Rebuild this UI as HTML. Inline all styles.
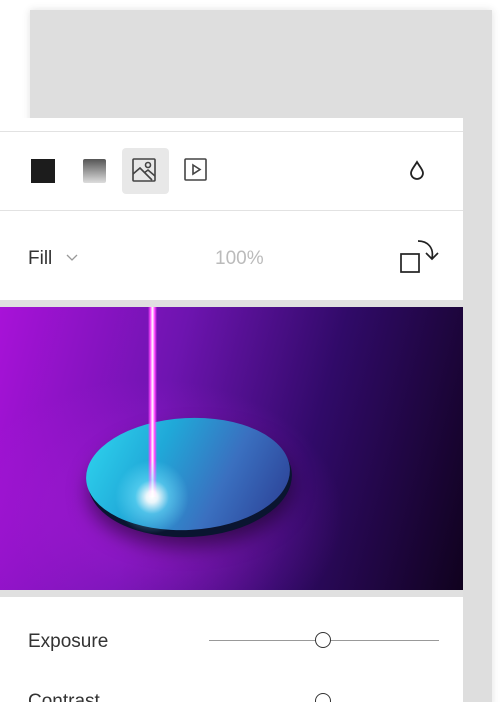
<!DOCTYPE html>
<html><head><style>
html,body{margin:0;width:500px;height:702px;overflow:hidden;background:#fff;font-family:"Liberation Sans",sans-serif;position:relative}
.back{position:absolute;left:30px;top:10px;width:462px;height:700px;background:#dedede;box-shadow:0 0 8px rgba(0,0,0,.12)}
.panel{position:absolute;left:0;top:118px;width:463px;height:584px;background:#fff;overflow:hidden}
.line{position:absolute;left:0;width:463px;height:1px;background:#e2e2e2}
.t{position:absolute;color:#333;font-size:19px}
</style></head><body>
<div class="back"></div>
<div class="panel">
 <div class="line" style="top:13px"></div>
 <div style="position:absolute;left:31px;top:41px;width:24px;height:24px;background:#1c1c1c"></div>
 <div style="position:absolute;left:83px;top:41px;width:23px;height:24px;background:linear-gradient(#555,#ddd);border-radius:2px"></div>
 <div style="position:absolute;left:122px;top:30px;width:47px;height:46px;background:#e8e8e8;border-radius:4px"></div>
 <svg style="position:absolute;left:132px;top:40px" width="26" height="26" viewBox="0 0 26 26" fill="none" stroke="#444" stroke-width="1.6"><rect x="1" y="1" width="22" height="22" rx="1"/><circle cx="16" cy="7" r="2.5"/><path d="M1 16 L8 10 L20 22 M12 15 L16 12 L23 18"/></svg>
 <svg style="position:absolute;left:184px;top:40px" width="24" height="24" viewBox="0 0 24 24" fill="none" stroke="#444" stroke-width="1.6"><rect x="1" y="1" width="21" height="21" rx="1"/><path d="M9 7 L16 11.5 L9 16Z"/></svg>
 <svg style="position:absolute;left:408px;top:42px" width="18" height="20" viewBox="0 0 18 20" fill="none" stroke="#222" stroke-width="1.8"><path d="M9 2 C6 7 3 10 3 13 A6 6 0 0 0 15 13 C15 10 12 7 9 2Z"/></svg>
 <div class="line" style="top:92px"></div>
 <div class="t" style="left:28px;top:130px">Fill</div>
 <svg style="position:absolute;left:66px;top:136px" width="12" height="8" viewBox="0 0 12 8" fill="none" stroke="#999" stroke-width="1.3"><path d="M1 1 L6 6 L11 1"/></svg>
 <div class="t" style="left:215px;top:130px;color:#bbb">100%</div>
 <svg style="position:absolute;left:398px;top:120px" width="44" height="36" viewBox="0 0 44 36" fill="none" stroke="#222" stroke-width="1.7"><rect x="3" y="16" width="18" height="18"/><path d="M20 3 C30 3 36 10 34 20 M28 15 L34 21 L40 15"/></svg>
 <div style="position:absolute;left:0;top:182px;width:463px;height:7px;background:#e0e0e0"></div>
 <div style="position:absolute;left:0;top:189px;width:463px;height:283px;overflow:hidden;background:linear-gradient(105deg,#a812d8 0%,#6e14b0 35%,#300a68 65%,#10021e 100%)">
  <div style="position:absolute;left:-60px;top:60px;width:420px;height:300px;background:radial-gradient(ellipse at center,rgba(190,30,230,.5),transparent 65%)"></div>
  <div style="position:absolute;left:88px;top:114px;width:204px;height:116px;border-radius:50%;background:#0a1530;transform:rotate(-3deg);box-shadow:0 10px 20px rgba(0,0,0,.5)"></div>
  <div style="position:absolute;left:86px;top:111px;width:204px;height:112px;border-radius:50%;background:linear-gradient(120deg,#30d8f0 0%,#20a8d8 35%,#3a70c0 65%,#2a3a90 100%);transform:rotate(-3deg)"></div>
  <div style="position:absolute;left:148px;top:0;width:9px;height:190px;background:linear-gradient(90deg,transparent,#ff40ff,#fff,#ff40ff,transparent)"></div>
  <div style="position:absolute;left:112px;top:150px;width:80px;height:80px;border-radius:50%;background:radial-gradient(circle,#fff 0%,rgba(255,255,255,.9) 10%,rgba(120,230,255,.5) 30%,transparent 65%)"></div>
 </div>
 <div style="position:absolute;left:0;top:472px;width:463px;height:7px;background:#e0e0e0"></div>
 <div class="t" style="left:28px;top:513px">Exposure</div>
 <div style="position:absolute;left:209px;top:522px;width:230px;height:1px;background:#999"></div>
 <div style="position:absolute;left:315px;top:514px;width:14px;height:14px;border:1.5px solid #333;border-radius:50%;background:#fff"></div>
 <div class="t" style="left:28px;top:573px">Contrast</div>
 <div style="position:absolute;left:315px;top:575px;width:14px;height:14px;border:1.5px solid #333;border-radius:50%;background:#fff"></div>
</div>
</body></html>
